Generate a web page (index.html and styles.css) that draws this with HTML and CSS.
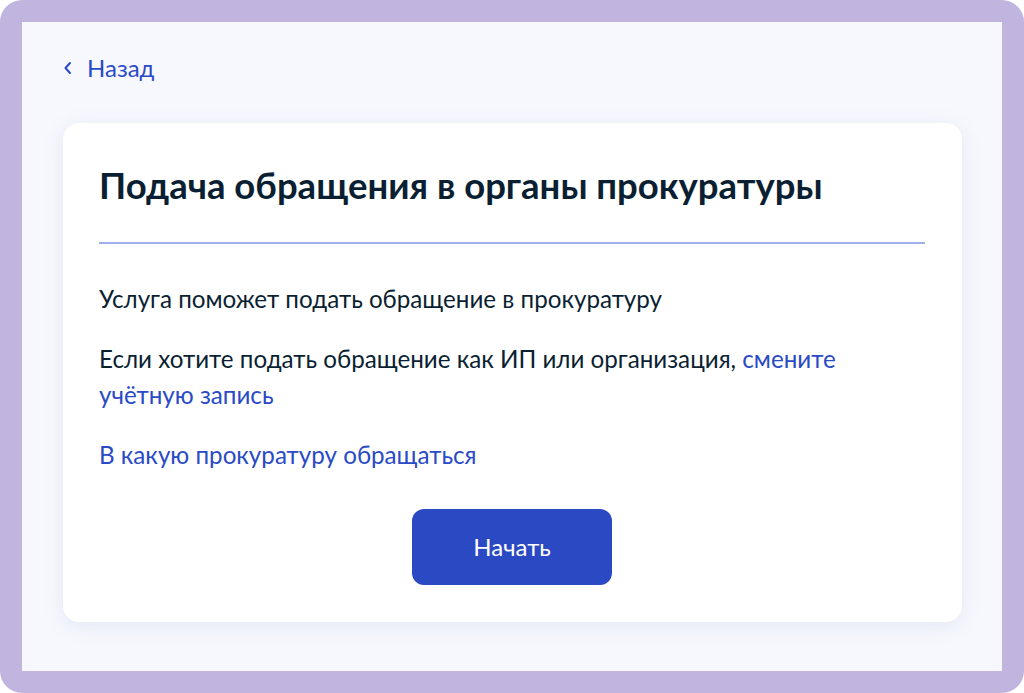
FILE: index.html
```html
<!DOCTYPE html>
<html>
<head>
  <title>Подача обращения в органы прокуратуры</title>
  <link rel="stylesheet" href="styles.css">
</head>
<body>
  <div class="frame">
    <div class="screen">
      <a class="back" href="#">
        <svg width="10" height="14" viewBox="0 0 10 14"><path d="M7 2 L2.5 7 L7 12" fill="none" stroke="currentColor" stroke-width="2" stroke-linecap="round" stroke-linejoin="round"/></svg>
        <span>Назад</span>
      </a>

      <div class="card">
        <h1>Подача обращения в органы прокуратуры</h1>
        <div class="divider"></div>
        <p>Услуга поможет подать обращение в прокуратуру</p>
        <p>Если хотите подать обращение как ИП или организация, <a href="#">смените учётную запись</a></p>
        <p><a href="#">В какую прокуратуру обращаться</a></p>
        <div class="actions">
          <button>Начать</button>
        </div>
      </div>
    </div>
  </div>
</body>
</html>
```

FILE: styles.css
```css
:root {
  --frame-color: #c1b5df;
  --bg-color: #f6f8fd;
  --text-color: #0b1f33;
  --link-color: #2a4ac6;
  --button-color: #2b49c3;
  --divider-color: #9fb0ec;
}

body {
  margin: 0;
  background: #ffffff;
  font-family: 'Lato', sans-serif;
  color: var(--text-color);
}

.frame {
  width: 1024px;
  height: 693px;
  box-sizing: border-box;
  padding: 22px;
  background-color: var(--frame-color);
  border-radius: 22px;
}

.screen {
  height: 100%;
  box-sizing: border-box;
  background-color: var(--bg-color);
  padding: 33px 40px 0 41px;
}

.back {
  display: inline-flex;
  align-items: center;
  gap: 14px;
  color: var(--link-color);
  text-decoration: none;
  font-size: 24px;
  line-height: 26px;
}

.back svg {
  display: block;
}

.card {
  margin-top: 42px;
  width: 899px;
  height: 499px;
  box-sizing: border-box;
  background: white;
  border-radius: 16px;
  box-shadow: 0 4px 20px rgba(102, 119, 179, 0.12);
  padding: 40px 37px 0 36px;
}

h1 {
  margin: 0;
  font-size: 36.5px;
  font-weight: 700;
  line-height: 44px;
}

.divider {
  height: 1.5px;
  background-color: var(--divider-color);
  margin: 35px 0 37px;
}

p {
  margin: 0 0 24px;
  font-size: 24.2px;
  line-height: 36px;
}

p a {
  color: var(--link-color);
  text-decoration: none;
}

.actions {
  display: flex;
  justify-content: center;
  margin-top: 36px;
}

button {
  width: 200px;
  height: 76px;
  border: none;
  border-radius: 12px;
  background-color: var(--button-color);
  color: white;
  font-family: 'Lato', sans-serif;
  font-size: 24px;
  cursor: pointer;
}
```
